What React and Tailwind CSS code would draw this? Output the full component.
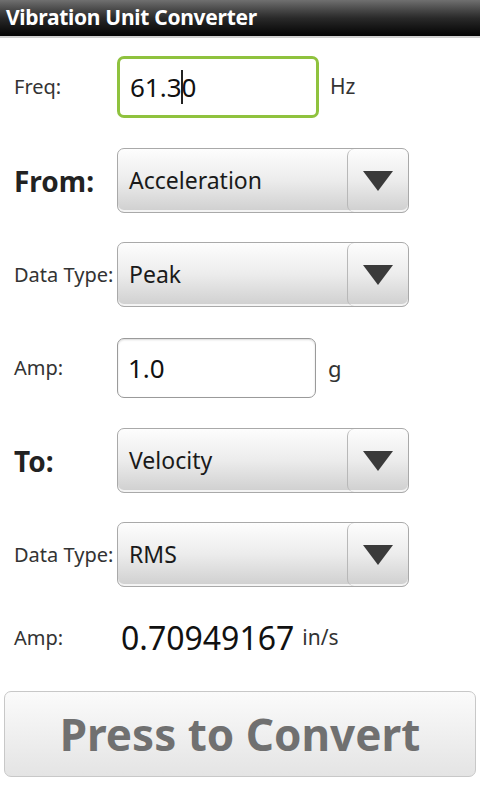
import React, {useState} from 'react';

const font = {fontFamily: '"Noto Sans", "Open Sans", sans-serif'};

const Spinner = ({value}) => (
    <div className="flex w-[292px] h-[65px] rounded-[7px] border border-[#a9a9a9] bg-gradient-to-b from-[#fdfdfd] via-[#ececec] to-[#cfcfcf] shadow-[inset_0_-2px_0_#f4f4f4] overflow-hidden">
        <div className="flex-1 flex items-center pl-[11px] text-[23px] text-[#1a1a1a]">{value}</div>
        <div className="w-[61px] flex items-center justify-center border-l border-[#b8b8b8] rounded-[7px]">
            <svg width="32" height="22" viewBox="0 0 32 22">
                <path d="M1 1 H31 L16 21 Z" fill="#3a3a3a"/>
            </svg>
        </div>
    </div>
);

const Label = ({children, big}) => (
    <div className={big
        ? "w-[103px] shrink-0 text-[28px] font-bold text-[#222]"
        : "w-[103px] shrink-0 text-[20px] text-[#333]"}>
        {children}
    </div>
);

const App = () => {
    const [freq, setFreq] = useState("61.30");
    const [amp, setAmp] = useState("1.0");

    return (
        <div style={font} className="w-[480px] h-[800px] bg-white overflow-hidden">
            <div className="h-[38px] bg-gradient-to-b from-[#707070] via-[#2a2a2a] to-[#050505] flex items-center pl-[6px] border-b-2 border-[#cfcfcf]">
                <span className="text-white font-bold text-[21px] tracking-[-0.3px]">Vibration Unit Converter</span>
            </div>

            <div className="pl-[14px]">
                <div className="flex items-center mt-[18px] h-[62px]">
                    <Label>Freq:</Label>
                    <div className="w-[202px] h-[62px] rounded-[7px] border-[3px] border-[#8fc23e] flex items-center pl-[10px] text-[26px] text-[#111]">
                        <span>61.3</span><span className="w-[2px] h-[34px] bg-[#222] -mx-[1px]"></span><span>0</span>
                    </div>
                    <span className="ml-[11px] text-[21px] text-[#333]">Hz</span>
                </div>

                <div className="flex items-center mt-[30px]">
                    <Label big>From:</Label>
                    <Spinner value="Acceleration"/>
                </div>

                <div className="flex items-center mt-[29px]">
                    <Label>Data Type:</Label>
                    <Spinner value="Peak"/>
                </div>

                <div className="flex items-center mt-[31px] h-[60px]">
                    <Label>Amp:</Label>
                    <div className="w-[199px] h-[60px] rounded-[7px] border border-[#9a9a9a] flex items-center pl-[10px] text-[26px] text-[#111] shadow-[inset_0_1px_2px_rgba(0,0,0,0.15)]">
                        {amp}
                    </div>
                    <span className="ml-[12px] text-[22px] text-[#333]">g</span>
                </div>

                <div className="flex items-center mt-[30px]">
                    <Label big>To:</Label>
                    <Spinner value="Velocity"/>
                </div>

                <div className="flex items-center mt-[29px]">
                    <Label>Data Type:</Label>
                    <Spinner value="RMS"/>
                </div>

                <div className="flex items-center mt-[28px] h-[46px]">
                    <Label>Amp:</Label>
                    <span className="ml-[4px] text-[32px] text-[#111]">0.70949167</span>
                    <span className="ml-[8px] text-[21px] text-[#333]">in/s</span>
                </div>
            </div>

            <div className="px-[4px] mt-[30px]">
                <button className="w-full h-[86px] rounded-[7px] border border-[#c8c8c8] bg-gradient-to-b from-[#fbfbfb] to-[#e4e4e4] text-[#707070] text-[44px] font-bold">
                    Press to Convert
                </button>
            </div>
        </div>
    );
};

export default App;
